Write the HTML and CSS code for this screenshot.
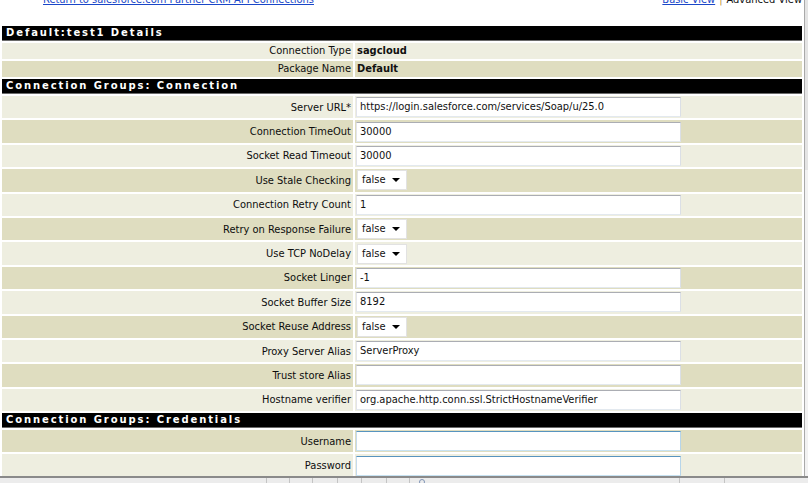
FILE: index.html
```html
<!DOCTYPE html>
<html>
<head>
<meta charset="utf-8">
<title>Default:test1 Details</title>
<link rel="stylesheet" href="styles.css">
</head>
<body>
<div class="window">
  <div class="viewport">
    <div class="page">
      <div class="topbar">
        <a class="link back" href="#">Return to salesforce.com Partner CRM API Connections</a>
        <div class="views"><a class="link" href="#">Basic View</a><span class="sep">|</span><span class="current">Advanced View</span></div>
      </div>
      <table class="details">
        <colgroup><col class="c-label"><col class="c-value"></colgroup>
        <tr><td class="head" colspan="2">Default:test1 Details</td></tr>
        <tr class="info light"><td class="label">Connection Type</td><td class="value"><b>sagcloud</b></td></tr>
        <tr class="info dark"><td class="label">Package Name</td><td class="value"><b>Default</b></td></tr>
        <tr><td class="head" colspan="2">Connection Groups: Connection</td></tr>
        <tr class="field light"><td class="label">Server URL*</td><td class="value"><div class="input">https://login.salesforce.com/services/Soap/u/25.0</div></td></tr>
        <tr class="field dark"><td class="label">Connection TimeOut</td><td class="value"><div class="input">30000</div></td></tr>
        <tr class="field light"><td class="label">Socket Read Timeout</td><td class="value"><div class="input">30000</div></td></tr>
        <tr class="field dark"><td class="label">Use Stale Checking</td><td class="value"><div class="select">false<span class="arrow"></span></div></td></tr>
        <tr class="field light"><td class="label">Connection Retry Count</td><td class="value"><div class="input">1</div></td></tr>
        <tr class="field dark"><td class="label">Retry on Response Failure</td><td class="value"><div class="select">false<span class="arrow"></span></div></td></tr>
        <tr class="field light"><td class="label">Use TCP NoDelay</td><td class="value"><div class="select">false<span class="arrow"></span></div></td></tr>
        <tr class="field dark"><td class="label">Socket Linger</td><td class="value"><div class="input">-1</div></td></tr>
        <tr class="field light"><td class="label">Socket Buffer Size</td><td class="value"><div class="input">8192</div></td></tr>
        <tr class="field dark"><td class="label">Socket Reuse Address</td><td class="value"><div class="select">false<span class="arrow"></span></div></td></tr>
        <tr class="field light"><td class="label">Proxy Server Alias</td><td class="value"><div class="input">ServerProxy</div></td></tr>
        <tr class="field dark"><td class="label">Trust store Alias</td><td class="value"><div class="input"></div></td></tr>
        <tr class="field light"><td class="label">Hostname verifier</td><td class="value"><div class="input">org.apache.http.conn.ssl.StrictHostnameVerifier</div></td></tr>
        <tr><td class="head" colspan="2">Connection Groups: Credentials</td></tr>
        <tr class="field dark"><td class="label">Username</td><td class="value"><div class="input blue"></div></td></tr>
        <tr class="field light"><td class="label">Password</td><td class="value"><div class="input blue"></div></td></tr>
      </table>
    </div>
  </div>
  <div class="scrollbar"><div class="thumb"></div></div>
</div>
<div class="status">
  <div class="sc w267"></div>
  <div class="sc w23"></div>
  <div class="sc w23"></div>
  <div class="sc w25"></div>
  <div class="sc w24"></div>
  <div class="sc w25"></div>
  <div class="sc w23"></div>
  <div class="sc w270"><span class="globe"></span></div>
  <div class="sc w45"></div>
  <div class="sc rest"></div>
</div>
</body>
</html>
```

FILE: styles.css
```css
html, body {
  margin: 0;
  padding: 0;
  background: #ffffff;
  overflow: hidden;
}

body {
  width: 808px;
  height: 483px;
  display: flex;
  flex-direction: column;
  font-family: "DejaVu Sans Condensed", "DejaVu Sans", sans-serif;
  font-stretch: condensed;
  font-size: 11px;
  color: #111;
}

.window {
  flex: 1;
  display: flex;
  min-height: 0;
}

.viewport {
  flex: 1;
  overflow: hidden;
}

.page {
  margin-top: -7px;
}

.topbar {
  height: 31px;
  display: flex;
  justify-content: space-between;
  align-items: flex-start;
  line-height: 14px;
}

.link {
  color: #1a47c8;
  text-decoration: underline;
}

.back {
  margin-left: 43px;
}

.views {
  margin-right: 2px;
  display: flex;
  gap: 4px;
}

.sep {
  color: #c0923a;
}

.current {
  color: #111;
}

.details {
  width: 804px;
  border-collapse: separate;
  border-spacing: 2px;
  table-layout: fixed;
}

.c-label { width: 351px; }

.details td {
  padding: 0;
}

.head {
  background: #000;
  color: #fff;
  font-family: "DejaVu Sans", sans-serif;
  font-stretch: normal;
  font-weight: bold;
  font-size: 10px;
  letter-spacing: 1.9px;
  line-height: 14px;
  height: 14px;
  padding-left: 4px !important;
  border-bottom: 1px solid #6a6a6a;
}

.light td { background: #eeeee0; }
.dark td { background: #dfddc0; }

.label {
  text-align: right;
  padding-right: 2px !important;
  color: #0d0d0d;
}

.info td {
  height: 16px;
  line-height: 16px;
}

.info .value {
  padding-left: 2px !important;
}

.info b {
  font-weight: bold;
  color: #111;
}

.field td {
  height: 22.4px;
  vertical-align: middle;
}

.input {
  box-sizing: border-box;
  width: 325px;
  height: 20px;
  margin-left: 1px;
  background: #fff;
  border: 1px solid;
  border-color: #abadb3 #dbdfe6 #e3e9ef #e2e3ea;
  padding: 0 3px;
  line-height: 18px;
  color: #111;
  white-space: nowrap;
  overflow: hidden;
}

.input.blue {
  border-color: #5794bf #b7d5ea #c7e2f1 #c5daed;
}

.select {
  box-sizing: border-box;
  width: 50px;
  height: 20px;
  margin-left: 2px;
  background: #fff;
  border: 1px solid #e2e2e2;
  padding: 0 0 0 4px;
  line-height: 18px;
  display: flex;
  align-items: center;
  justify-content: space-between;
}

.arrow {
  width: 0;
  height: 0;
  margin-right: 6px;
  border-left: 4px solid transparent;
  border-right: 4px solid transparent;
  border-top: 4px solid #000;
}

.scrollbar {
  width: 3px;
  border-left: 1px solid #a9a9a9;
  background: #f2f2f2;
  display: flex;
  flex-direction: column;
}

.thumb {
  height: 170px;
  background: #e4e4e4;
}

.status {
  height: 5px;
  border-top: 2px solid #8a8a8a;
  background: #ececec;
  display: flex;
}

.sc {
  box-sizing: border-box;
  border-right: 1px solid #c4c4c4;
  height: 100%;
  position: relative;
}

.w267 { width: 267px; }
.w23 { width: 23px; }
.w24 { width: 24px; }
.w25 { width: 25px; }
.w270 { width: 270px; }
.w45 { width: 45px; }
.rest { flex: 1; border-right: none; }

.globe {
  position: absolute;
  left: 9px;
  top: 1px;
  width: 6px;
  height: 6px;
  border-radius: 50%;
  border: 1px solid #7f93b5;
  box-sizing: border-box;
}
```
